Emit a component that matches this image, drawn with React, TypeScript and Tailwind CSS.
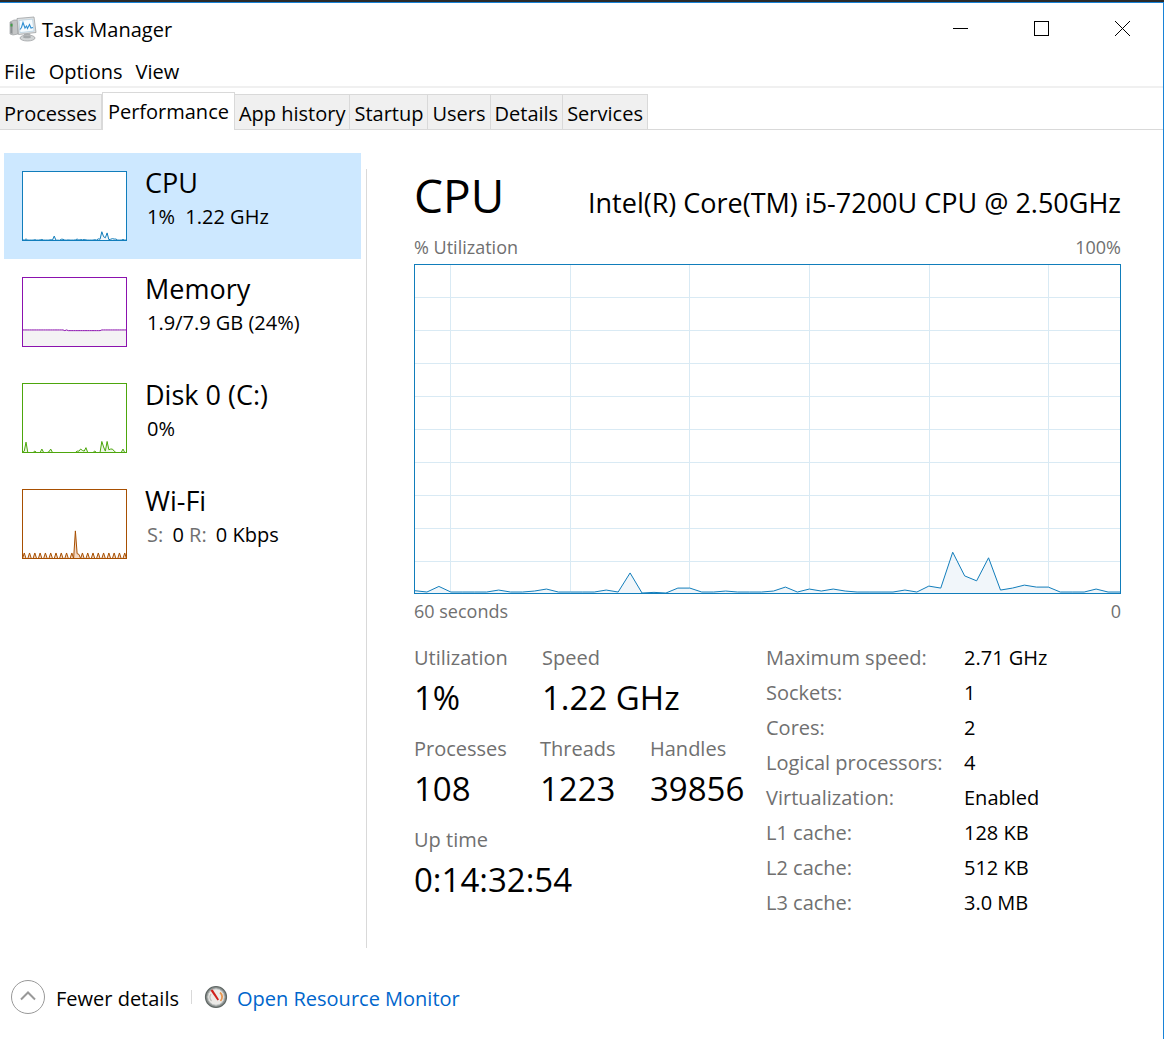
import { useState } from 'react'

interface Resource {
  name: string
  stroke: string
  fill: string
  values: number[]
  detail: React.ReactNode
}

const cpuValues = [
  1, 0.6, 2.3, 0.6, 0.6, 0.6, 0.6, 1.2, 0.6, 0.6, 0.9, 1.5, 0.6, 0.6, 0.6, 0.6, 1.2, 0.6, 6.4, 0.3,
  0.5, 0.3, 1.8, 1.8, 0.6, 0.6, 0.9, 0.6, 0.6, 0.6, 0.9, 2.1, 0.6, 1.5, 0.9, 1.5, 0.9, 0.6, 0.6, 0.6,
  0.6, 1.2, 0.6, 2.4, 1.8, 12.7, 5.5, 4, 11, 1.2, 1.8, 2.7, 2.1, 2.1, 0.6, 0.6, 0.6, 1.5, 0.6, 0.6,
]

const memoryValues = Array.from({ length: 60 }, (_, i) => (i === 24 || (i > 25 && i < 45) ? 23 : 24))

const diskValues = [
  0, 2, 15, 0, 0, 0, 0, 2, 0, 0, 0, 5, 0, 0, 0, 1, 5, 0, 0, 0,
  0, 0, 0, 0, 0, 0, 0, 0, 0, 0, 0, 2, 2, 5, 3, 2, 7, 0, 0, 0,
  0, 2, 0, 0, 0, 16, 8, 2, 16, 4, 5, 5, 2, 0, 0, 0, 0, 5, 0, 0,
]

const wifiValues = [
  0, 8, 0, 0, 8, 0, 0, 8, 0, 0, 8, 0, 0, 8, 0, 0, 8, 0, 0, 8,
  0, 0, 8, 0, 0, 8, 0, 0, 8, 0, 40, 7, 6, 0, 8, 0, 0, 8, 0, 0,
  8, 0, 0, 8, 0, 0, 8, 0, 0, 8, 0, 0, 8, 0, 0, 8, 0, 0, 8, 0,
]

const resources: Resource[] = [
  { name: 'CPU', stroke: '#117dbb', fill: '#f1f6fa', values: cpuValues, detail: <>1%&nbsp; 1.22 GHz</> },
  { name: 'Memory', stroke: '#8b12ae', fill: '#f4f2f4', values: memoryValues, detail: '1.9/7.9 GB (24%)' },
  { name: 'Disk 0 (C:)', stroke: '#4da60c', fill: '#eff7e9', values: diskValues, detail: '0%' },
  {
    name: 'Wi-Fi',
    stroke: '#a74f01',
    fill: '#f3d8c4',
    values: wifiValues,
    detail: (
      <>
        <span className="mr-1 text-[#707070]">S:</span> 0 <span className="mr-1 text-[#707070]">R:</span> 0 Kbps
      </>
    ),
  },
]

const tabs = ['Processes', 'Performance', 'App history', 'Startup', 'Users', 'Details', 'Services']

const specs = [
  ['Maximum speed:', '2.71 GHz'],
  ['Sockets:', '1'],
  ['Cores:', '2'],
  ['Logical processors:', '4'],
  ['Virtualization:', 'Enabled'],
  ['L1 cache:', '128 KB'],
  ['L2 cache:', '512 KB'],
  ['L3 cache:', '3.0 MB'],
]

function toPoints(values: number[], width: number, height: number) {
  return values
    .map((v, i) => `${((i * width) / (values.length - 1)).toFixed(2)},${(height - (v * height) / 100).toFixed(2)}`)
    .join(' ')
}

function Thumbnail({ resource }: { resource: Resource }) {
  const points = toPoints(resource.values, 104, 69)
  return (
    <svg
      viewBox="0 0 105 70"
      width="105"
      height="70"
      strokeWidth="1"
      stroke={resource.stroke}
      className="shrink-0"
      aria-hidden="true"
    >
      <rect x="0.5" y="0.5" width="104" height="69" fill="#fff" />
      <g transform="translate(0.5 0.5)">
        <polygon points={`0,69 ${points} 104,69`} fill={resource.fill} stroke="none" />
        <polyline points={points} fill="none" />
      </g>
      <rect x="0.5" y="0.5" width="104" height="69" fill="none" />
    </svg>
  )
}

function UtilizationChart() {
  const points = toPoints(cpuValues, 705, 329)
  return (
    <div className="border border-[#117dbb]">
      <svg viewBox="0 0 705 328" preserveAspectRatio="none" className="block h-[328px] w-full" aria-label="CPU utilization">
        <g stroke="#d9eaf4">
          {[35, 155, 274, 394, 514, 633].map((x) => (
            <line key={x} x1={x + 0.5} x2={x + 0.5} y1="0" y2="328" vectorEffect="non-scaling-stroke" />
          ))}
          {[32, 65, 98, 131, 164, 197, 230, 263, 296].map((y) => (
            <line key={y} x1="0" x2="705" y1={y + 0.5} y2={y + 0.5} vectorEffect="non-scaling-stroke" />
          ))}
        </g>
        <polygon points={`0,329 ${points} 705,329`} fill="#f1f6fa" />
        <polyline points={points} fill="none" stroke="#117dbb" vectorEffect="non-scaling-stroke" />
      </svg>
    </div>
  )
}

function TaskManagerIcon() {
  return (
    <svg viewBox="0 0 28 28" width="28" height="28" aria-hidden="true">
      <path d="M1 6l4-2h4v14l-5 1-3-1z" fill="#c4c6c7" stroke="#8e9294" strokeWidth="0.6" />
      <path d="M1.500 6l2 1v11l-2-1z" fill="#8b9092" />
      <path d="M1.500 8h2v2.500h-2z" fill="#3f9e45" />
      <path d="M15 18l6-.5 1 4h-7z" fill="#b4b7b9" />
      <ellipse cx="18.500" cy="22" rx="7.500" ry="3" fill="#d2d5d6" stroke="#969a9c" strokeWidth="0.7" />
      <ellipse cx="18" cy="21" rx="4" ry="1.300" fill="#a5a9ab" />
      <path d="M8 2.500L25 1l2 15.500L9.500 18.500z" fill="#dfe1e2" stroke="#9da1a3" strokeWidth="0.8" />
      <path d="M10 4.500l13.500-1.300 1.500 11.800-14 1.600z" fill="#f6fbfe" stroke="#a9c9dd" strokeWidth="0.6" />
      <path d="M11 13.500l1.500-2 1.500-5 2 5.500 1.500-2 1 2.500 2-4 1.500 3.500 2-.5" fill="none" stroke="#2f8fd3" strokeWidth="1.100" />
    </svg>
  )
}

function ResourceMonitorIcon() {
  return (
    <svg viewBox="0 0 24 24" width="24" height="24" aria-hidden="true">
      <circle cx="12" cy="12" r="10.500" fill="#8d9391" stroke="#5f6664" strokeWidth="1.200" />
      <circle cx="12" cy="12" r="8.200" fill="#eceae7" stroke="#c6c9c8" strokeWidth="1" />
      <path d="M16 7.500a5.800 5.800 0 0 1 .5 8.500" fill="none" stroke="#e9954f" strokeWidth="1.800" />
      <path d="M7.500 16a5.800 5.800 0 0 1-.5-7" fill="none" stroke="#bdbdb9" strokeWidth="1.200" />
      <path d="M6.500 5.500l2.200-1 6.300 10-1.500 1z" fill="#d0201c" />
    </svg>
  )
}

function Stat({ label, value }: { label: string; value: string }) {
  return (
    <div className="whitespace-nowrap">
      <dt className="text-xl leading-7 text-[#707070]">{label}</dt>
      <dd className="text-[33px] leading-[51px]">{value}</dd>
    </div>
  )
}

export default function App() {
  const [tab, setTab] = useState('Performance')
  const [selected, setSelected] = useState('CPU')

  return (
    <div className="flex min-h-screen flex-col border-t-2 border-[#2b2b2b] bg-white font-['Open_Sans',sans-serif] text-black">
      <div className="flex flex-1 flex-col border-t border-r border-[#1883d7]">
        <header className="flex h-[53px] items-start justify-between pl-[9px]">
          <div className="flex h-[53px] items-center gap-[5px]">
            <TaskManagerIcon />
            <h1 className="text-xl">Task Manager</h1>
          </div>
          <div className="flex">
            <button aria-label="Minimize" className="flex h-[51px] w-[81px] items-center justify-center">
              <svg width="15" height="15" stroke="#000" aria-hidden="true">
                <path d="M0 7.500h15" />
              </svg>
            </button>
            <button aria-label="Maximize" className="flex h-[51px] w-[81px] items-center justify-center">
              <svg width="15" height="15" stroke="#000" fill="none" aria-hidden="true">
                <rect x="0.5" y="0.5" width="14" height="14" />
              </svg>
            </button>
            <button aria-label="Close" className="flex h-[51px] w-[81px] items-center justify-center">
              <svg width="15" height="15" stroke="#000" aria-hidden="true">
                <path d="M0 0l15 15M15 0L0 15" />
              </svg>
            </button>
          </div>
        </header>

        <nav className="flex h-8 items-end gap-[13px] border-b-2 border-[#f0f0f0] pl-1 text-xl leading-7">
          <button>File</button>
          <button>Options</button>
          <button>View</button>
        </nav>

        <div role="tablist" className="flex h-[42px] items-end border-b border-[#d9d9d9] pt-1 text-xl">
          {tabs.map((name) => (
            <button
              key={name}
              role="tab"
              aria-selected={tab === name}
              onClick={() => setTab(name)}
              className={
                tab === name
                  ? '-mb-px h-[38px] border border-b-0 border-[#d9d9d9] bg-white px-[5px]'
                  : 'h-[35px] border-t border-r border-[#d9d9d9] bg-[#f0f0f0] px-1 pt-1'
              }
            >
              {name}
            </button>
          ))}
        </div>

        <div className="flex flex-1">
          <aside className="mt-[23px] ml-1 w-[357px] shrink-0">
            {resources.map((resource) => (
              <button
                key={resource.name}
                onClick={() => setSelected(resource.name)}
                className={`flex h-[106px] w-full items-start gap-[18px] px-[18px] pt-[18px] text-left ${
                  selected === resource.name ? 'bg-[#cde8ff]' : ''
                }`}
              >
                <Thumbnail resource={resource} />
                <span className="-mt-2 block">
                  <span className="block text-[27px] leading-10">{resource.name}</span>
                  <span className="block pl-0.5 text-xl leading-7">{resource.detail}</span>
                </span>
              </button>
            ))}
          </aside>

          <div className="mt-[39px] ml-[5px] w-px bg-[#d9d9d9]" />

          <main className="min-w-0 flex-1 pt-[31px] pr-[42px] pl-[47px]">
            <div className="flex items-baseline justify-between">
              <h2 className="text-[46px] leading-[68px]">CPU</h2>
              <p className="text-[27px]">Intel(R) Core(TM) i5-7200U CPU @ 2.50GHz</p>
            </div>
            <div className="flex justify-between pt-px text-lg leading-[34px] text-[#707070]">
              <span>% Utilization</span>
              <span>100%</span>
            </div>
            <UtilizationChart />
            <div className="flex justify-between text-lg leading-[34px] text-[#707070]">
              <span>60 seconds</span>
              <span>0</span>
            </div>

            <div className="flex pt-3">
              <dl className="flex w-[352px] shrink-0 flex-col gap-3 pt-1">
                <div className="grid grid-cols-[128px_1fr]">
                  <Stat label="Utilization" value="1%" />
                  <Stat label="Speed" value="1.22 GHz" />
                </div>
                <div className="grid grid-cols-[126px_110px_1fr]">
                  <Stat label="Processes" value="108" />
                  <Stat label="Threads" value="1223" />
                  <Stat label="Handles" value="39856" />
                </div>
                <Stat label="Up time" value="0:14:32:54" />
              </dl>
              <dl className="text-xl leading-[35px] whitespace-nowrap">
                {specs.map(([label, value]) => (
                  <div key={label} className="flex">
                    <dt className="w-[198px] text-[#707070]">{label}</dt>
                    <dd>{value}</dd>
                  </div>
                ))}
              </dl>
            </div>
          </main>
        </div>

        <footer className="flex items-center pt-8 pb-[25px] pl-[11px] text-xl">
          <button className="flex items-center gap-[11px]">
            <svg viewBox="0 0 34 34" width="34" height="34" fill="none" aria-hidden="true">
              <circle cx="17" cy="17" r="16.500" stroke="#999" />
              <path d="M10 19.500l7-7 7 7" stroke="#999" strokeWidth="2" />
            </svg>
            <span className="pt-1">Fewer details</span>
          </button>
          <span className="mx-3 h-[14px] w-px bg-[#d9d9d9]" />
          <a href="#resource-monitor" className="flex items-center gap-[9px] text-[#0066cc]">
            <ResourceMonitorIcon />
            <span className="pt-1">Open Resource Monitor</span>
          </a>
        </footer>
      </div>
    </div>
  )
}
